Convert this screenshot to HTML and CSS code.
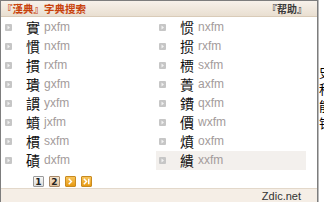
FILE: index.html
```html
<!DOCTYPE html>
<html>
<head>
<meta charset="utf-8">
<link rel="stylesheet" href="styles.css">
</head>
<body>
<div class="panel">
  <div class="hd">
    <span class="hd-title">『漢典』字典搜索</span>
    <span class="hd-help">『帮助』</span>
  </div>
  <div class="list">
    <div class="item"><svg class="bl" viewBox="0 0 7 7"><rect width="7" height="7" rx="1" fill="#c6c6c6"/><polygon points="2.5,1.5 5,3.5 2.5,5.5" fill="#f2f2f2"/></svg><span class="ch">實</span><span class="cd">pxfm</span></div>
    <div class="item"><svg class="bl" viewBox="0 0 7 7"><rect width="7" height="7" rx="1" fill="#c6c6c6"/><polygon points="2.5,1.5 5,3.5 2.5,5.5" fill="#f2f2f2"/></svg><span class="ch">惯</span><span class="cd">nxfm</span></div>
    <div class="item"><svg class="bl" viewBox="0 0 7 7"><rect width="7" height="7" rx="1" fill="#c6c6c6"/><polygon points="2.5,1.5 5,3.5 2.5,5.5" fill="#f2f2f2"/></svg><span class="ch">慣</span><span class="cd">nxfm</span></div>
    <div class="item"><svg class="bl" viewBox="0 0 7 7"><rect width="7" height="7" rx="1" fill="#c6c6c6"/><polygon points="2.5,1.5 5,3.5 2.5,5.5" fill="#f2f2f2"/></svg><span class="ch">掼</span><span class="cd">rxfm</span></div>
    <div class="item"><svg class="bl" viewBox="0 0 7 7"><rect width="7" height="7" rx="1" fill="#c6c6c6"/><polygon points="2.5,1.5 5,3.5 2.5,5.5" fill="#f2f2f2"/></svg><span class="ch">摜</span><span class="cd">rxfm</span></div>
    <div class="item"><svg class="bl" viewBox="0 0 7 7"><rect width="7" height="7" rx="1" fill="#c6c6c6"/><polygon points="2.5,1.5 5,3.5 2.5,5.5" fill="#f2f2f2"/></svg><span class="ch">槚</span><span class="cd">sxfm</span></div>
    <div class="item"><svg class="bl" viewBox="0 0 7 7"><rect width="7" height="7" rx="1" fill="#c6c6c6"/><polygon points="2.5,1.5 5,3.5 2.5,5.5" fill="#f2f2f2"/></svg><span class="ch">璝</span><span class="cd">gxfm</span></div>
    <div class="item"><svg class="bl" viewBox="0 0 7 7"><rect width="7" height="7" rx="1" fill="#c6c6c6"/><polygon points="2.5,1.5 5,3.5 2.5,5.5" fill="#f2f2f2"/></svg><span class="ch">蕢</span><span class="cd">axfm</span></div>
    <div class="item"><svg class="bl" viewBox="0 0 7 7"><rect width="7" height="7" rx="1" fill="#c6c6c6"/><polygon points="2.5,1.5 5,3.5 2.5,5.5" fill="#f2f2f2"/></svg><span class="ch">謴</span><span class="cd">yxfm</span></div>
    <div class="item"><svg class="bl" viewBox="0 0 7 7"><rect width="7" height="7" rx="1" fill="#c6c6c6"/><polygon points="2.5,1.5 5,3.5 2.5,5.5" fill="#f2f2f2"/></svg><span class="ch">鐨</span><span class="cd">qxfm</span></div>
    <div class="item"><svg class="bl" viewBox="0 0 7 7"><rect width="7" height="7" rx="1" fill="#c6c6c6"/><polygon points="2.5,1.5 5,3.5 2.5,5.5" fill="#f2f2f2"/></svg><span class="ch">蟦</span><span class="cd">jxfm</span></div>
    <div class="item"><svg class="bl" viewBox="0 0 7 7"><rect width="7" height="7" rx="1" fill="#c6c6c6"/><polygon points="2.5,1.5 5,3.5 2.5,5.5" fill="#f2f2f2"/></svg><span class="ch">價</span><span class="cd">wxfm</span></div>
    <div class="item"><svg class="bl" viewBox="0 0 7 7"><rect width="7" height="7" rx="1" fill="#c6c6c6"/><polygon points="2.5,1.5 5,3.5 2.5,5.5" fill="#f2f2f2"/></svg><span class="ch">樌</span><span class="cd">sxfm</span></div>
    <div class="item"><svg class="bl" viewBox="0 0 7 7"><rect width="7" height="7" rx="1" fill="#c6c6c6"/><polygon points="2.5,1.5 5,3.5 2.5,5.5" fill="#f2f2f2"/></svg><span class="ch">燌</span><span class="cd">oxfm</span></div>
    <div class="item"><svg class="bl" viewBox="0 0 7 7"><rect width="7" height="7" rx="1" fill="#c6c6c6"/><polygon points="2.5,1.5 5,3.5 2.5,5.5" fill="#f2f2f2"/></svg><span class="ch">磧</span><span class="cd">dxfm</span></div>
    <div class="item item-hl"><svg class="bl" viewBox="0 0 7 7"><rect width="7" height="7" rx="1" fill="#c6c6c6"/><polygon points="2.5,1.5 5,3.5 2.5,5.5" fill="#f2f2f2"/></svg><span class="ch">繢</span><span class="cd">xxfm</span></div>
  </div>
  <div class="pager">
    <span class="pg pg-num">1</span>
    <span class="pg pg-cur">2</span>
    <span class="pg pg-arrow"><svg viewBox="0 0 10 10" width="9" height="9"><polyline points="3,2 6,5 3,8" fill="none" stroke="#fff" stroke-width="1.6"/></svg></span>
    <span class="pg pg-arrow"><svg viewBox="0 0 10 10" width="9" height="9"><polyline points="2,2 5,5 2,8" fill="none" stroke="#fff" stroke-width="1.6"/><line x1="7.5" y1="2" x2="7.5" y2="8" stroke="#fff" stroke-width="1.6"/></svg></span>
  </div>
  <div class="ft">Zdic.net</div>
</div>
<div class="side">史
科
能
错
</div>
</body>
</html>
```

FILE: styles.css
```css
html, body {
  margin: 0;
  padding: 0;
}
body {
  width: 324px;
  height: 202px;
  overflow: hidden;
  display: flex;
  background: #fff;
}
.panel {
  width: 318px;
  height: 202px;
  box-sizing: border-box;
  border: 1px solid #7d7d7d;
  border-bottom: none;
  display: flex;
  flex-direction: column;
  background: #fff;
  flex: none;
}
.hd {
  height: 15px;
  display: flex;
  justify-content: space-between;
  align-items: center;
  background: linear-gradient(#f7f1ea, #e9dfd1);
  border-bottom: 1px solid #d9cbb8;
  font-family: "Noto Sans CJK SC", sans-serif;
  font-weight: bold;
  line-height: 15px;
}
.hd-title {
  color: #c8420c;
  font-size: 10.5px;
  padding-left: 1px;
}
.hd-help {
  color: #3a3a3a;
  font-size: 10px;
  padding-right: 10px;
}
.list {
  display: grid;
  grid-template-columns: 154px 154px;
  grid-auto-rows: 19px;
  padding-left: 1px;
  padding-top: 1px;
}
.item {
  display: flex;
  align-items: center;
  width: 150px;
}
.item-hl {
  background: #f3f0ed;
}
.bl {
  width: 7px;
  height: 7px;
  margin-left: 3px;
  flex: none;
}
.ch {
  margin-left: 14px;
  font-family: "Noto Sans CJK TC", sans-serif;
  font-size: 14px;
  line-height: 19px;
  color: #111;
  width: 14px;
}
.cd {
  margin-left: 4px;
  font-family: "Liberation Sans", sans-serif;
  font-size: 12px;
  color: #a39b9b;
  line-height: 19px;
}
.pager {
  display: flex;
  gap: 5px;
  padding-left: 32px;
  padding-top: 6px;
}
.pg {
  width: 11px;
  height: 11px;
  box-sizing: border-box;
  display: flex;
  align-items: center;
  justify-content: center;
  font-family: "DejaVu Sans", sans-serif;
  font-size: 9px;
  font-weight: bold;
  border: 1px solid #9a9a9a;
  border-radius: 1px;
}
.pg-num {
  background: linear-gradient(#f8f8f8, #dcdcdc);
  color: #222;
}
.pg-cur {
  background: linear-gradient(#f7e6cf, #e2c29c);
  border-color: #a88a6a;
  color: #222;
}
.pg-arrow {
  background: linear-gradient(#f8c45a, #e79a12);
  border-color: #c88a20;
}
.ft {
  margin-top: auto;
  height: 13px;
  border-top: 1px solid #e3d8ca;
  background: #f5eee6;
  font-family: "Liberation Sans", sans-serif;
  font-size: 11px;
  line-height: 15px;
  color: #333;
  text-align: right;
  padding-right: 16px;
}
.side {
  flex: 1;
  overflow: hidden;
  white-space: pre;
  font-family: "Noto Sans CJK SC", sans-serif;
  font-size: 13px;
  line-height: 17px;
  padding-top: 63px;
  color: #000;
  border-left: 1px solid #bbb;
}
```
